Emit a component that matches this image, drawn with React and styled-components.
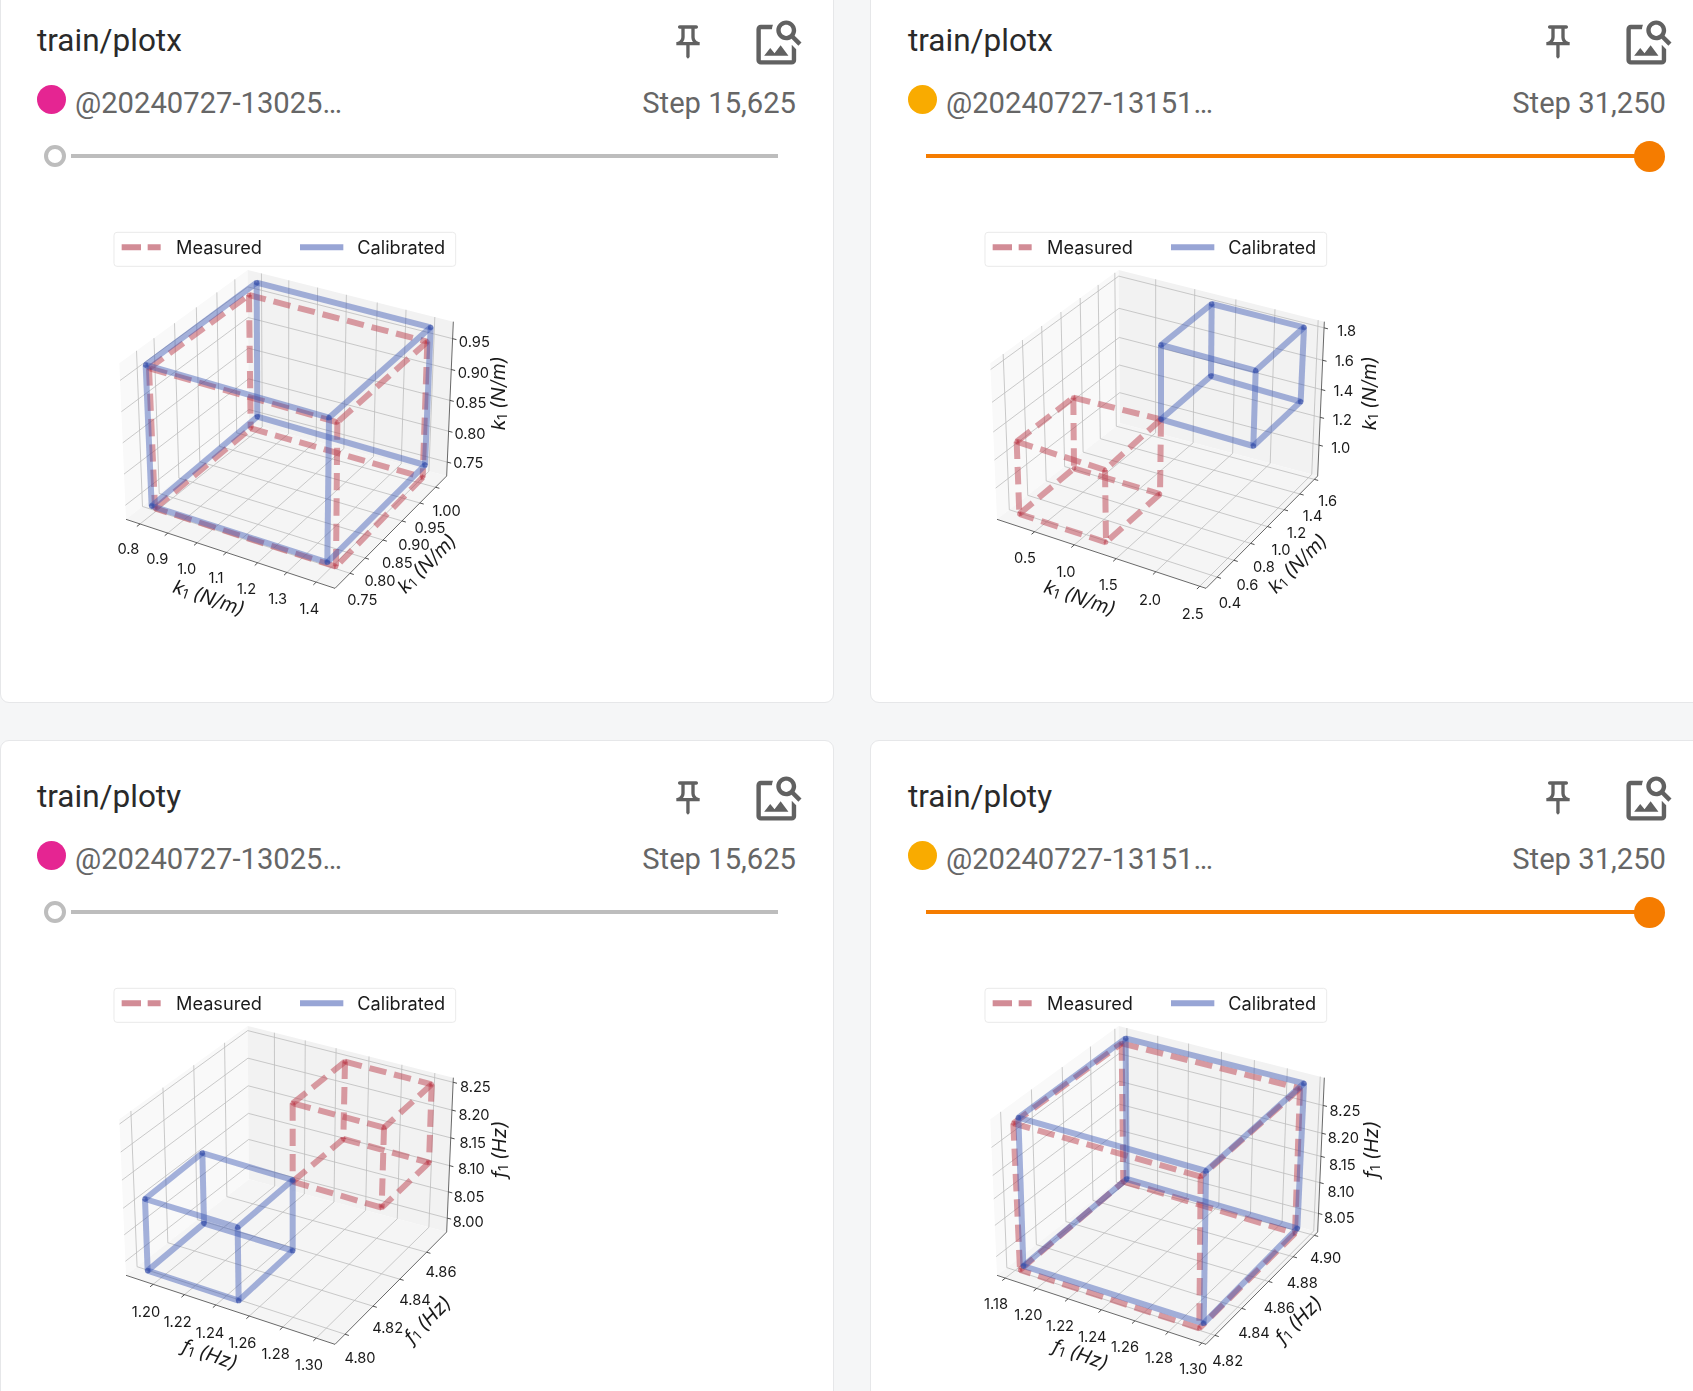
import React from "react";
import styled, { createGlobalStyle } from "styled-components";

const Global = createGlobalStyle`
  html, body { margin: 0; padding: 0; height: 1391px; overflow: hidden; background: #f5f6f7; }
  body { font-family: Roboto, "Liberation Sans", sans-serif; }
`;

const Board = styled.main`
  display: grid;
  grid-template-columns: 834px 834px;
  grid-auto-rows: 718px;
  column-gap: 36px;
  row-gap: 37px;
  margin-top: -15px;
  width: 1704px;
`;
const Card = styled.section`
  box-sizing: border-box;
  display: flex;
  flex-direction: column;
  background: #fff;
  border: 1px solid #e6e7e9;
  border-radius: 9px;
  padding: ${(p) => (p.$row ? 30 : 29)}px 0 0 ${(p) => (p.$col ? 37 : 36)}px;
`;
const TitleRow = styled.header`
  display: flex;
  align-items: center;
  height: 50px;
  padding-right: 28px;
`;
const Title = styled.h3`
  flex: 1;
  margin: 0;
  font-size: 31.5px;
  font-weight: 400;
  color: #2a2a2a;
`;
const IconBox = styled.span`
  display: block;
  width: ${(p) => p.$size}px;
  height: ${(p) => p.$size}px;
  margin-left: ${(p) => p.$gap}px;
  color: #616161;
  margin-top: 4px;
  svg { display: block; width: 100%; height: 100%; fill: currentColor; }
`;
const StatusRow = styled.div`
  display: flex;
  align-items: center;
  height: 40px;
  margin-top: 15px;
  padding-right: 37px;
`;
const Dot = styled.span`
  width: 29px;
  height: 29px;
  border-radius: 50%;
  background: ${(p) => p.$color};
  margin-right: 9px;
  transform: translateY(-1px);
`;
const Run = styled.span`
  flex: 1;
  font-size: 29.2px;
  color: #666;
  transform: translateY(3px);
`;
const Step = styled.span`
  font-size: 29.2px;
  color: #666;
  transform: translateY(3px);
`;
const Slider = styled.div`
  display: flex;
  align-items: center;
  height: 32px;
  margin-top: 20px;
  padding-left: ${(p) => (p.$end ? 18 : 7)}px;
  padding-right: ${(p) => (p.$end ? 38.5 : 55)}px;
`;
const Track = styled.span`
  flex: 1;
  height: 4px;
  background: ${(p) => (p.$end ? "#f57c00" : "#bdbdbd")};
  margin-left: ${(p) => (p.$end ? 0 : 5)}px;
  margin-right: ${(p) => (p.$end ? -4 : 0)}px;
`;
const Ring = styled.span`
  box-sizing: border-box;
  width: 22px;
  height: 22px;
  border-radius: 50%;
  border: 4px solid #bdbdbd;
  background: #fff;
`;
const Knob = styled.span`
  width: 31px;
  height: 31px;
  border-radius: 50%;
  background: #f57c00;
`;
const PlotFigure = styled.figure`
  margin: 48px 0 0 63px;
  width: 440px;
  height: 420px;
  svg { display: block; width: 440px; height: 420px; overflow: visible; filter: blur(0.35px); }
`;
const Tick = styled.text`
  font-family: Inter, "Noto Sans", sans-serif;
  font-size: 44px;
  fill: #1a1a1a;
  text-anchor: middle;
  dominant-baseline: central;
`;
const AxisName = styled(Tick)`
  font-size: 58px;
  font-style: italic;
`;
const LegendText = styled.text`
  font-family: Inter, "Noto Sans", sans-serif;
  font-size: 54.5px;
  fill: #1a1a1a;
`;

const PinIcon = () => (
  <svg viewBox="0 0 24 24"><path d="M14,4v5c0,1.12,0.37,2.16,1,3H9c0.65-0.86,1-1.9,1-3V4H14 M17,2H7C6.45,2,6,2.45,6,3c0,0.55,0.45,1,1,1c0,0,0,0,0,0l1,0v5c0,1.66-1.34,3-3,3v2h5.97v7l1,1l1-1v-7H19v-2c0,0,0,0,0,0c-1.66,0-3-1.34-3-3V4l1,0c0,0,0,0,0,0c0.55,0,1-0.45,1-1C18,2.45,17.55,2,17,2L17,2z" /></svg>
);
const ImageSearchIcon = () => (
  <svg viewBox="0 0 24 24"><path d="M18 13v7H4V6h5.02c.05-.71.22-1.38.48-2H4c-1.1 0-2 .9-2 2v14c0 1.1.9 2 2 2h14c1.1 0 2-.9 2-2v-5l-2-2zm-1.5 5h-11l2.75-3.53 1.96 2.36 2.75-3.54L16.5 18zm2.8-9.11c.44-.7.7-1.51.7-2.39C20 4.01 17.99 2 15.5 2S11 4.01 11 6.5s2.01 4.5 4.49 4.5c.88 0 1.7-.26 2.39-.7L21 13.42 22.42 12 19.3 8.89zM15.5 9C14.12 9 13 7.88 13 6.5S14.12 4 15.5 4 18 5.12 18 6.5 16.88 9 15.5 9z" /></svg>
);

const A = [78, 898], F = [705, 1105], R = [1040, 768], B = [447, 610],
  TL = [58, 430], TB = [443, 150], TR = [1060, 305];
const lerp = (a, b, t) => [a[0] + (b[0] - a[0]) * t, a[1] + (b[1] - a[1]) * t];
const away = (p, from, len) => {
  const dx = p[0] - from[0], dy = p[1] - from[1], d = Math.hypot(dx, dy);
  return [p[0] + (dx / d) * len, p[1] + (dy / d) * len];
};
const poly = (pts) => pts.map((p) => p.join(",")).join(" ");
const Seg = ({ a, b, ...rest }) => <line x1={a[0]} y1={a[1]} x2={b[0]} y2={b[1]} {...rest} />;

function Frame({ xt, yt, zt }) {
  const grid = [], ticks = [];
  xt.forEach((t) => {
    const p = lerp(A, F, t), q = lerp(B, R, t), r = lerp(TB, TR, t);
    grid.push([p, q], [q, r]);
    ticks.push([p, away(p, q, 12)]);
  });
  yt.forEach((t) => {
    const p = lerp(F, R, t), q = lerp(A, B, t), r = lerp(TL, TB, t);
    grid.push([p, q], [q, r]);
    ticks.push([p, away(p, q, 12)]);
  });
  zt.forEach((t) => {
    const p = lerp(A, TL, t), q = lerp(B, TB, t), r = lerp(R, TR, t);
    grid.push([p, q], [q, r]);
    ticks.push([r, away(r, q, 12)]);
  });
  return (
    <g>
      <polygon points={poly([A, B, TB, TL])} fill="#f9f9f9" />
      <polygon points={poly([B, R, TR, TB])} fill="#f2f2f2" />
      <polygon points={poly([A, F, R, B])} fill="#f5f5f5" />
      {grid.map(([a, b], i) => <Seg key={i} a={a} b={b} stroke="#bdbdbd" strokeWidth="2.4" />)}
      {ticks.map(([a, b], i) => <Seg key={i} a={a} b={b} stroke="#222" strokeWidth="2.4" />)}
      <Seg a={A} b={F} stroke="#444" strokeWidth="2.4" />
      <Seg a={F} b={R} stroke="#444" strokeWidth="2.4" />
      <Seg a={R} b={TR} stroke="#444" strokeWidth="2.4" />
    </g>
  );
}

function Legend() {
  return (
    <g>
      <rect x="42" y="37" width="1025" height="102" rx="9" fill="#fff" stroke="#e6e6e6" strokeWidth="2.5" />
      <line x1="65" y1="82" x2="182" y2="82" stroke="#d28c96" strokeWidth="18" strokeDasharray="58 20 40 0" />
      <LegendText x="228" y="101">Measured</LegendText>
      <line x1="600" y1="82" x2="730" y2="82" stroke="#98a5d5" strokeWidth="18" />
      <LegendText x="772" y="101">Calibrated</LegendText>
    </g>
  );
}

function Cube({ top, bottom, color, dot, dashed, r }) {
  const edges = [];
  for (let i = 0; i < 4; i++) {
    edges.push([top[i], top[(i + 1) % 4]], [bottom[i], bottom[(i + 1) % 4]], [top[i], bottom[i]]);
  }
  return (
    <g>
      {edges.map(([a, b], i) => (
        <Seg key={i} a={a} b={b} stroke={color} strokeWidth="18" strokeDasharray={dashed ? "52 24" : undefined} />
      ))}
      {[...top, ...bottom].map((p, i) => <circle key={i} cx={p[0]} cy={p[1]} r={r} fill={dot} />)}
    </g>
  );
}

function AxisLabel({ letter, unit, x, y, rot }) {
  return (
    <AxisName x={x} y={y} transform={`rotate(${rot} ${x} ${y})`}>
      {letter}<tspan dy="12" fontSize="40" fontStyle="normal">1</tspan><tspan dy="-12"> ({unit})</tspan>
    </AxisName>
  );
}

function Plot({ p, dx, dy }) {
  return (
    <PlotFigure>
      <svg viewBox={`${dx} ${dy} 1320 1260`}>
        <g transform={`translate(${dx} ${dy})`}>
          <Frame xt={p.xt} yt={p.yt} zt={p.zt} />
          <Legend />
        </g>
        <Cube top={p.red[0]} bottom={p.red[1]} color="rgba(190,70,85,0.52)" dot="rgba(186,50,66,0.5)" r={7} dashed />
        <Cube top={p.blue[0]} bottom={p.blue[1]} color="rgba(60,90,180,0.46)" dot="rgba(55,80,170,0.7)" r={8} />
        {p.labels.map(([s, x, y], i) => <Tick key={i} x={x} y={y}>{s}</Tick>)}
        {p.axes.map(([x, y, rot], i) => <AxisLabel key={i} letter={p.letter} unit={p.unit} x={x} y={y} rot={rot} />)}
      </svg>
    </PlotFigure>
  );
}

const plots = [
  {
    title: "train/plotx", letter: "k", unit: "N/m", run: "@20240727-13025…", step: "Step 15,625", color: "#e52592", end: false, dx: 0, dy: 0,
    xt: [.067, .2, .34, .48, .63, .77, .91], yt: [.134, .27, .43, .6, .76, .9], zt: [.09, .29, .49, .69, .89],
    blue: [[[470, 188], [992, 322], [687, 593], [137, 435]], [[472, 590], [975, 735], [682, 1027], [155, 858]]],
    red: [[[447, 225], [982, 365], [712, 607], [147, 445]], [[452, 625], [968, 772], [708, 1040], [165, 865]]],
    labels: [["0.8", 85, 988], ["0.9", 172, 1017], ["1.0", 260, 1047], ["1.1", 348, 1075], ["1.2", 440, 1107], ["1.3", 533, 1137], ["1.4", 628, 1168],
      ["0.75", 787, 1140], ["0.80", 840, 1083], ["0.85", 892, 1030], ["0.90", 942, 975], ["0.95", 990, 925], ["1.00", 1040, 873],
      ["0.95", 1123, 367], ["0.90", 1120, 458], ["0.85", 1113, 550], ["0.80", 1110, 642], ["0.75", 1105, 730]],
    axes: [[327, 1132, 19], [980, 1030, -45], [1195, 520, -90]],
  },
  {
    title: "train/plotx", letter: "k", unit: "N/m", run: "@20240727-13151…", step: "Step 31,250", color: "#f9ab00", end: true, dx: 33, dy: 0,
    xt: [.18, .37, .57, .76, .97], yt: [.1, .25, .4, .55, .7, .84, .97], zt: [.2, .38, .56, .75, .96],
    blue: [[[755, 252], [1032, 322], [887, 452], [603, 375]], [[753, 468], [1022, 545], [880, 678], [603, 598]]],
    red: [[[340, 533], [603, 598], [435, 750], [170, 665]], [[342, 745], [600, 822], [438, 967], [178, 882]]],
    labels: [["0.5", 195, 1015], ["1.0", 318, 1055], ["1.5", 445, 1095], ["2.0", 570, 1140], ["2.5", 698, 1182],
      ["0.4", 810, 1150], ["0.6", 862, 1095], ["0.8", 912, 1040], ["1.0", 963, 990], ["1.2", 1010, 940], ["1.4", 1058, 888], ["1.6", 1103, 843],
      ["1.8", 1160, 333], ["1.6", 1153, 423], ["1.4", 1150, 513], ["1.2", 1147, 600], ["1.0", 1142, 683]],
    axes: [[360, 1132, 19], [1012, 1030, -45], [1228, 520, -90]],
  },
  {
    title: "train/ploty", letter: "f", unit: "Hz", run: "@20240727-13025…", step: "Step 15,625", color: "#e52592", end: false, dx: 0, dy: -12,
    xt: [.13, .28, .43, .59, .75, .91], yt: [.09, .34, .58, .82], zt: [.09, .26, .43, .61, .79, .97],
    blue: [[[307, 519], [578, 600], [413, 742], [135, 657]], [[312, 730], [578, 812], [416, 962], [143, 872]]],
    red: [[[735, 245], [995, 313], [852, 443], [578, 370]], [[730, 477], [987, 548], [845, 683], [578, 605]]],
    labels: [["1.20", 138, 995], ["1.22", 233, 1027], ["1.24", 330, 1058], ["1.26", 427, 1090], ["1.28", 527, 1122], ["1.30", 627, 1155],
      ["4.80", 780, 1133], ["4.82", 863, 1045], ["4.84", 945, 960], ["4.86", 1023, 877],
      ["8.25", 1126, 322], ["8.20", 1122, 405], ["8.15", 1118, 488], ["8.10", 1114, 568], ["8.05", 1107, 650], ["8.00", 1105, 727]],
    axes: [[330, 1122, 19], [982, 1018, -45], [1198, 508, -90]],
  },
  {
    title: "train/ploty", letter: "f", unit: "Hz", run: "@20240727-13151…", step: "Step 31,250", color: "#f9ab00", end: true, dx: 33, dy: -12,
    xt: [.04, .19, .34, .5, .66, .82, .98], yt: [.08, .32, .56, .78, .97], zt: [.12, .32, .49, .64, .82],
    blue: [[[497, 175], [1032, 310], [738, 573], [175, 413]], [[500, 597], [1012, 745], [731, 1030], [190, 858]]],
    red: [[[485, 190], [1020, 325], [722, 590], [160, 430]], [[490, 605], [1005, 760], [718, 1045], [180, 870]]],
    labels: [["1.18", 108, 973], ["1.20", 205, 1005], ["1.22", 300, 1037], ["1.24", 397, 1070], ["1.26", 495, 1102], ["1.28", 597, 1135], ["1.30", 700, 1168],
      ["4.82", 803, 1143], ["4.84", 882, 1060], ["4.86", 958, 985], ["4.88", 1027, 908], ["4.90", 1097, 833],
      ["8.25", 1155, 393], ["8.20", 1150, 475], ["8.15", 1147, 555], ["8.10", 1143, 635], ["8.05", 1138, 713]],
    axes: [[362, 1122, 19], [1015, 1018, -45], [1232, 508, -90]],
  },
];

export default function App() {
  return (
    <>
      <Global />
      <Board>
        {plots.map((p, i) => (
          <Card key={i} $col={i % 2 === 1} $row={i >= 2}>
            <TitleRow>
              <Title>{p.title}</Title>
              <IconBox $size={40} $gap={0}><PinIcon /></IconBox>
              <IconBox $size={53} $gap={44}><ImageSearchIcon /></IconBox>
            </TitleRow>
            <StatusRow>
              <Dot $color={p.color} />
              <Run>{p.run}</Run>
              <Step>{p.step}</Step>
            </StatusRow>
            <Slider $end={p.end}>
              {p.end ? <><Track $end /><Knob /></> : <><Ring /><Track /></>}
            </Slider>
            <Plot p={p} dx={p.dx} dy={p.dy} />
          </Card>
        ))}
      </Board>
    </>
  );
}
